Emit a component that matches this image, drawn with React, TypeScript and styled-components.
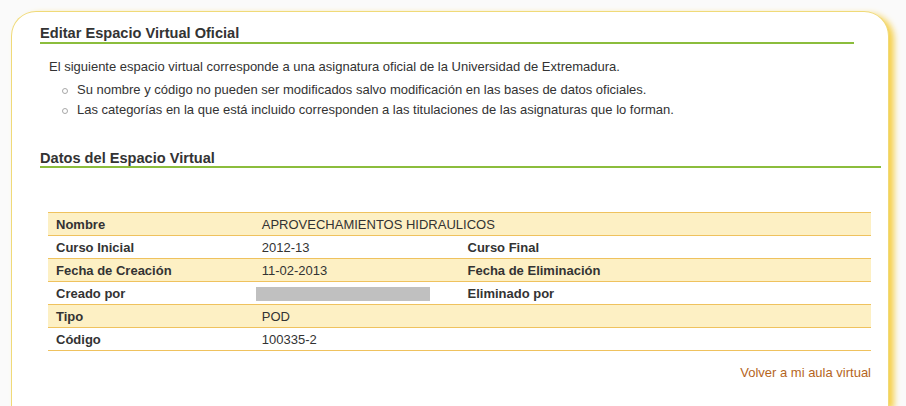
import React from "react";
import styled, { createGlobalStyle } from "styled-components";

const GlobalStyle = createGlobalStyle`
  html, body {
    margin: 0;
    padding: 0;
    background: #fafafa;
    overflow: hidden;
  }
  body {
    font-family: "Liberation Sans", Arial, sans-serif;
    color: #333;
  }
`;

const Page = styled.div`
  padding: 11px 0 0 11px;
  height: 406px;
  box-sizing: border-box;
  overflow: hidden;
`;

const Card = styled.div`
  box-sizing: border-box;
  width: 878px;
  height: 395px;
  background: #fff;
  border: 1px solid #f0da78;
  border-bottom: none;
  border-radius: 25px 25px 0 0;
  box-shadow: 5px 3px 6px #f6d04a;
  padding-top: 13px;
`;

const Heading = styled.h2<{ $right: number }>`
  margin: 0 ${(p) => p.$right}px 0 28px;
  font-size: 14.6px;
  font-weight: bold;
  line-height: 16px;
  color: #333;
  padding-bottom: ${(p) => (p.$right > 10 ? 1 : 0)}px;
  border-bottom: 2px solid #8bbd3c;
`;

const Intro = styled.p`
  margin: 15px 0 0 37px;
  font-size: 13px;
  line-height: 16px;
  color: #333;
`;

const Notes = styled.ul`
  margin: 5px 0 30px 0;
  padding: 0 0 0 65px;
  list-style: none;
`;

const Note = styled.li`
  position: relative;
  font-size: 13px;
  line-height: 20px;
  color: #333;

  &::before {
    content: "";
    position: absolute;
    left: -15px;
    top: 8px;
    width: 4px;
    height: 4px;
    border: 1px solid #a8a8a8;
    border-radius: 50%;
  }
`;

const DataSection = styled.div`
  margin: 44px 0 0 36px;
  width: 823px;
`;

const Table = styled.table`
  width: 100%;
  table-layout: fixed;
  border-collapse: collapse;
  font-size: 13px;
`;

const Row = styled.tr<{ $shaded?: boolean }>`
  background: ${(p) => (p.$shaded ? "#fdf0c4" : "#fff")};
  border-top: 1px solid #efc25e;
  border-bottom: 1px solid #efc25e;
`;

const Label = styled.th`
  text-align: left;
  font-weight: bold;
  color: #333;
  padding: 5px 8px 3px;
  line-height: 14px;
  white-space: nowrap;
`;

const Value = styled.td`
  padding: 5px 8px 3px;
  line-height: 14px;
  color: #333;
  white-space: nowrap;
`;

const Redacted = styled.span`
  display: block;
  width: 174px;
  height: 14px;
  margin-left: -6px;
  background: #c0c0c0;
`;

const Footer = styled.div`
  margin-top: 14px;
  text-align: right;
  font-size: 13px;
  line-height: 16px;
`;

const BackLink = styled.a`
  color: #b5651d;
  text-decoration: none;
`;

export default function App() {
  return (
    <>
      <GlobalStyle />
      <Page>
        <Card>
          <Heading $right={34}>Editar Espacio Virtual Oficial</Heading>
          <Intro>
            El siguiente espacio virtual corresponde a una asignatura oficial de la Universidad de Extremadura.
          </Intro>
          <Notes>
            <Note>Su nombre y código no pueden ser modificados salvo modificación en las bases de datos oficiales.</Note>
            <Note>Las categorías en la que está incluido corresponden a las titulaciones de las asignaturas que lo forman.</Note>
          </Notes>
          <Heading $right={7}>Datos del Espacio Virtual</Heading>
          <DataSection>
            <Table>
              <colgroup>
                <col />
                <col />
                <col />
                <col />
              </colgroup>
              <tbody>
                <Row $shaded>
                  <Label>Nombre</Label>
                  <Value colSpan={3}>APROVECHAMIENTOS HIDRAULICOS</Value>
                </Row>
                <Row>
                  <Label>Curso Inicial</Label>
                  <Value>2012-13</Value>
                  <Label>Curso Final</Label>
                  <Value></Value>
                </Row>
                <Row $shaded>
                  <Label>Fecha de Creación</Label>
                  <Value>11-02-2013</Value>
                  <Label>Fecha de Eliminación</Label>
                  <Value></Value>
                </Row>
                <Row>
                  <Label>Creado por</Label>
                  <Value>
                    <Redacted />
                  </Value>
                  <Label>Eliminado por</Label>
                  <Value></Value>
                </Row>
                <Row $shaded>
                  <Label>Tipo</Label>
                  <Value colSpan={3}>POD</Value>
                </Row>
                <Row>
                  <Label>Código</Label>
                  <Value colSpan={3}>100335-2</Value>
                </Row>
              </tbody>
            </Table>
            <Footer>
              <BackLink href="#">Volver a mi aula virtual</BackLink>
            </Footer>
          </DataSection>
        </Card>
      </Page>
    </>
  );
}
